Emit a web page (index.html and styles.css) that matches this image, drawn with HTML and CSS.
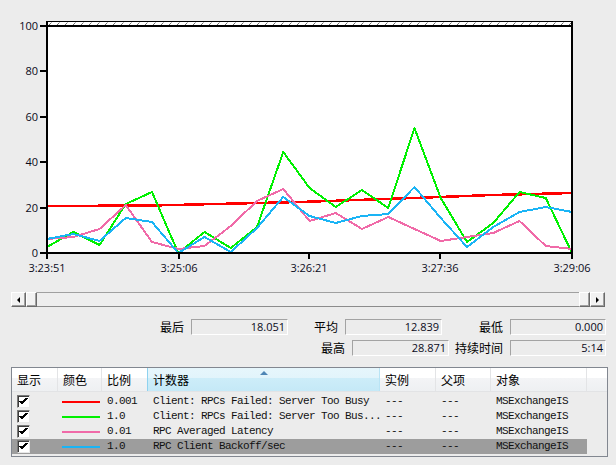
FILE: index.html
```html
<!DOCTYPE html>
<html lang="zh-CN">
<head>
<meta charset="utf-8">
<title>性能监视器</title>
<link rel="stylesheet" href="styles.css">
</head>
<body>
<div class="app">
  <svg class="chart" width="616" height="285" viewBox="0 0 616 285">
    <defs>
      <pattern id="hatch" x="47" y="22" width="8" height="4" patternUnits="userSpaceOnUse">
        <path d="M1.5 3.5 L4.5 0.5" stroke="#6e6e6e" stroke-width="1"/>
      </pattern>
      <clipPath id="plotclip"><rect x="47" y="26" width="525" height="228"/></clipPath>
    </defs>
    <rect x="47" y="22" width="525" height="4" fill="#fff"/>
    <rect x="47" y="22" width="525" height="4" fill="url(#hatch)"/>
    <rect x="47" y="26" width="525" height="227" fill="#fff"/>

    <g clip-path="url(#plotclip)" fill="none" stroke-linejoin="round">
      <polyline class="series" stroke="#ff0000" stroke-width="2.5" points="47,206 152,205.5 300,202 414,198 492,195 572,193"/>
      <polyline class="series" stroke="#00f000" stroke-width="2" points="47,247 73.25,232 99.5,245 125.75,204 152,192 178.25,253 204.5,232 230.75,248 257,227 283.25,152 309.5,188 335.75,207 362,190 388.25,208 414.5,128 440.75,198 467,242 493.25,223 519.5,192 545.75,198 572,253"/>
      <polyline class="series" stroke="#f06aa8" stroke-width="2" points="47,239 73.25,237 99.5,229 125.75,205 152,242 178.25,249 204.5,246 230.75,226 257,201 283.25,189 309.5,221 335.75,213 362,229 388.25,217 414.5,229 440.75,241 467,237 493.25,233 519.5,221 545.75,246 572,249"/>
      <polyline class="series" stroke="#1ab4f5" stroke-width="2" points="47,239 73.25,234 99.5,241 125.75,218 152,222 178.25,253 204.5,237 230.75,252 257,228 283.25,197 309.5,216 335.75,223 362,216 388.25,214 414.5,187 440.75,218 467,247 493.25,227 519.5,212 545.75,207 572,212"/>
    </g>

    <g fill="#000">
      <rect x="46" y="21" width="527" height="1"/>
      <rect x="46" y="25" width="527" height="2"/>
      <rect x="46" y="252" width="527" height="2"/>
      <rect x="46" y="21" width="2" height="233"/>
      <rect x="571" y="21" width="2" height="233"/>
      <rect x="40" y="25" width="6" height="2"/>
      <rect x="40" y="70" width="6" height="2"/>
      <rect x="40" y="116" width="6" height="2"/>
      <rect x="40" y="161" width="6" height="2"/>
      <rect x="40" y="207" width="6" height="2"/>
      <rect x="40" y="252" width="6" height="2"/>
      <rect x="46" y="253" width="2" height="6"/>
      <rect x="178" y="253" width="2" height="6"/>
      <rect x="308" y="253" width="2" height="6"/>
      <rect x="439" y="253" width="2" height="6"/>
      <rect x="571" y="253" width="2" height="6"/>
    </g>

    <g class="tick-label y-label">
      <text x="38" y="30">100</text>
      <text x="38" y="75">80</text>
      <text x="38" y="121">60</text>
      <text x="38" y="166">40</text>
      <text x="38" y="212">20</text>
      <text x="38" y="257">0</text>
    </g>
    <g class="tick-label x-label">
      <text x="47" y="272">3:23:51</text>
      <text x="179" y="272">3:25:06</text>
      <text x="309" y="272">3:26:21</text>
      <text x="440" y="272">3:27:36</text>
      <text x="572" y="272">3:29:06</text>
    </g>
  </svg>

  <div class="scrollbar">
    <div class="sb-btn"><span class="arrow arrow-left"></span></div>
    <div class="sb-thumb"></div>
    <div class="sb-track"></div>
    <div class="sb-thumb"></div>
    <div class="sb-btn"><span class="arrow arrow-right"></span></div>
  </div>

  <div class="stats">
    <div class="stat-row row-one">
      <span class="stat-label">最后</span><span class="stat-value">18.051</span>
      <span class="stat-label">平均</span><span class="stat-value">12.839</span>
      <span class="stat-label">最低</span><span class="stat-value">0.000</span>
    </div>
    <div class="stat-row row-two">
      <span class="stat-label">最高</span><span class="stat-value">28.871</span>
      <span class="stat-label">持续时间</span><span class="stat-value">5:14</span>
    </div>
  </div>

  <div class="counters">
    <div class="thead">
      <div class="th">显示</div>
      <div class="th">颜色</div>
      <div class="th">比例</div>
      <div class="th th-sorted">计数器</div>
      <div class="th">实例</div>
      <div class="th">父项</div>
      <div class="th">对象</div>
      <div class="th th-filler"></div>
    </div>
    <div class="tbody">
      <div class="tr">
        <div class="td"><span class="checkbox"><svg width="11" height="11" viewBox="0 0 11 11"><polyline points="2,5 4,7.5 9,2" fill="none" stroke="#000" stroke-width="2"/></svg></span></div>
        <div class="td"><span class="swatch swatch-red"></span></div>
        <div class="td mono">0.001</div>
        <div class="td mono">Client: RPCs Failed: Server Too Busy</div>
        <div class="td mono">---</div>
        <div class="td mono">---</div>
        <div class="td mono">MSExchangeIS</div>
      </div>
      <div class="tr">
        <div class="td"><span class="checkbox"><svg width="11" height="11" viewBox="0 0 11 11"><polyline points="2,5 4,7.5 9,2" fill="none" stroke="#000" stroke-width="2"/></svg></span></div>
        <div class="td"><span class="swatch swatch-green"></span></div>
        <div class="td mono">1.0</div>
        <div class="td mono">Client: RPCs Failed: Server Too Bus...</div>
        <div class="td mono">---</div>
        <div class="td mono">---</div>
        <div class="td mono">MSExchangeIS</div>
      </div>
      <div class="tr">
        <div class="td"><span class="checkbox"><svg width="11" height="11" viewBox="0 0 11 11"><polyline points="2,5 4,7.5 9,2" fill="none" stroke="#000" stroke-width="2"/></svg></span></div>
        <div class="td"><span class="swatch swatch-pink"></span></div>
        <div class="td mono">0.01</div>
        <div class="td mono">RPC Averaged Latency</div>
        <div class="td mono">---</div>
        <div class="td mono">---</div>
        <div class="td mono">MSExchangeIS</div>
      </div>
      <div class="tr tr-selected">
        <div class="td"><span class="checkbox"><svg width="11" height="11" viewBox="0 0 11 11"><polyline points="2,5 4,7.5 9,2" fill="none" stroke="#000" stroke-width="2"/></svg></span></div>
        <div class="td"><span class="swatch swatch-blue"></span></div>
        <div class="td mono">1.0</div>
        <div class="td mono">RPC Client Backoff/sec</div>
        <div class="td mono">---</div>
        <div class="td mono">---</div>
        <div class="td mono">MSExchangeIS</div>
      </div>
    </div>
  </div>
</div>
</body>
</html>
```

FILE: styles.css
```css
html, body {
  margin: 0;
  padding: 0;
}

body {
  width: 616px;
  height: 465px;
  overflow: hidden;
  background: #ececec;
  color: #000;
  font-family: "Noto Sans CJK SC", "Noto Sans", sans-serif;
}

.app {
  display: flex;
  flex-direction: column;
}

.chart {
  display: block;
}

.series {
  shape-rendering: crispEdges;
}

.tick-label text {
  font-family: "Open Sans", "Liberation Sans", sans-serif;
  font-size: 11px;
  fill: #0a0a1a;
}

.y-label text {
  text-anchor: end;
}

.x-label text {
  text-anchor: middle;
}

/* scrollbar */
.scrollbar {
  display: flex;
  margin: 7px 0 0 11px;
  width: 594px;
  height: 15px;
}

.sb-btn,
.sb-thumb {
  box-sizing: border-box;
  border: 1px solid;
  border-color: #ffffff #6a6a6a #6a6a6a #ffffff;
  box-shadow: inset -1px -1px 0 #a0a0a0;
  background: #f2f2f2;
}

.sb-btn {
  width: 15px;
  display: flex;
  align-items: center;
  justify-content: center;
}

.sb-thumb {
  width: 11px;
}

.sb-track {
  flex: 1;
  box-sizing: border-box;
  border-top: 1px solid #a0a0a0;
  border-bottom: 1px solid #8c8c8c;
  background: #eeeeee;
}

.arrow {
  width: 0;
  height: 0;
  border-top: 3px solid transparent;
  border-bottom: 3px solid transparent;
}

.arrow-left {
  border-right: 3px solid #000;
}

.arrow-right {
  border-left: 3px solid #000;
}

/* statistics */
.stats {
  display: flex;
  flex-direction: column;
  gap: 5px;
  margin-top: 12px;
}

.stat-row {
  display: grid;
  height: 16px;
}

.row-one {
  margin-left: 150px;
  grid-template-columns: 41px 97px 57px 97px 68px 96px;
}

.row-two {
  margin-left: 300px;
  grid-template-columns: 52px 97px 61px 96px;
}

.stat-label {
  box-sizing: border-box;
  padding-right: 7px;
  text-align: right;
  font-size: 12px;
  line-height: 16px;
  white-space: nowrap;
}

.stat-value {
  box-sizing: border-box;
  border: 1px solid;
  border-color: #a3a3a3 #ffffff #ffffff #a3a3a3;
  padding-right: 2px;
  text-align: right;
  font-family: "Open Sans", "Liberation Sans", sans-serif;
  font-size: 11px;
  line-height: 14px;
  color: #0a0a1a;
}

/* counter table */
.counters {
  box-sizing: border-box;
  width: 597px;
  height: 90px;
  margin: 11px 0 0 11px;
  border: 1px solid #828790;
  background: #ececec;
}

.thead {
  display: grid;
  grid-template-columns: 46px 44px 46px 232px 56px 55px 96px 1fr;
  height: 23px;
  background: linear-gradient(#ffffff 0%, #ffffff 45%, #f3f4f6 45%, #eef0f2 100%);
  border-bottom: 1px solid #e2e3e5;
}

.th {
  position: relative;
  box-sizing: border-box;
  padding-left: 5px;
  border-right: 1px solid #e3e4e6;
  font-size: 12px;
  line-height: 23px;
  white-space: nowrap;
}

.th-sorted {
  border-left: 1px solid #8fd2ef;
  border-right: 1px solid #b9e4f5;
  margin-left: -1px;
  padding-left: 5px;
  background: linear-gradient(#e6f6fc 0%, #e2f4fb 45%, #cdedf9 45%, #c5e9f7 100%);
}

.th-sorted::before {
  content: "";
  position: absolute;
  top: 3px;
  left: 50%;
  transform: translateX(-50%);
  border-left: 4px solid transparent;
  border-right: 4px solid transparent;
  border-bottom: 4px solid #4f86b5;
}

.th-filler {
  border-right: none;
}

.tbody {
  padding-top: 2px;
}

.tr {
  display: grid;
  grid-template-columns: 46px 44px 46px 232px 56px 55px 96px;
  width: 575px;
  height: 15px;
  align-items: center;
}

.tr-selected {
  background: #9d9d9d;
}

.td {
  box-sizing: border-box;
  padding-left: 5px;
  overflow: hidden;
  white-space: nowrap;
  display: flex;
  align-items: center;
  height: 15px;
}

.mono {
  font-family: "Liberation Mono", "DejaVu Sans Mono", monospace;
  font-size: 11px;
  letter-spacing: -0.6px;
  line-height: 15px;
  color: #111;
}

.checkbox {
  box-sizing: border-box;
  width: 13px;
  height: 13px;
  border: 1px solid;
  border-color: #7a7a7a #e8e8e8 #e8e8e8 #7a7a7a;
  box-shadow: inset 1px 1px 0 #3c3c3c;
  background: #fff;
  display: flex;
  align-items: center;
  justify-content: center;
}

.checkbox svg {
  display: block;
  shape-rendering: crispEdges;
}

.swatch {
  display: block;
  width: 38px;
  height: 2px;
  margin-left: -1px;
}

.swatch-red { background: #ff0000; }
.swatch-green { background: #00f000; }
.swatch-pink { background: #f06aa8; }
.swatch-blue { background: #1ab4f5; }
```
